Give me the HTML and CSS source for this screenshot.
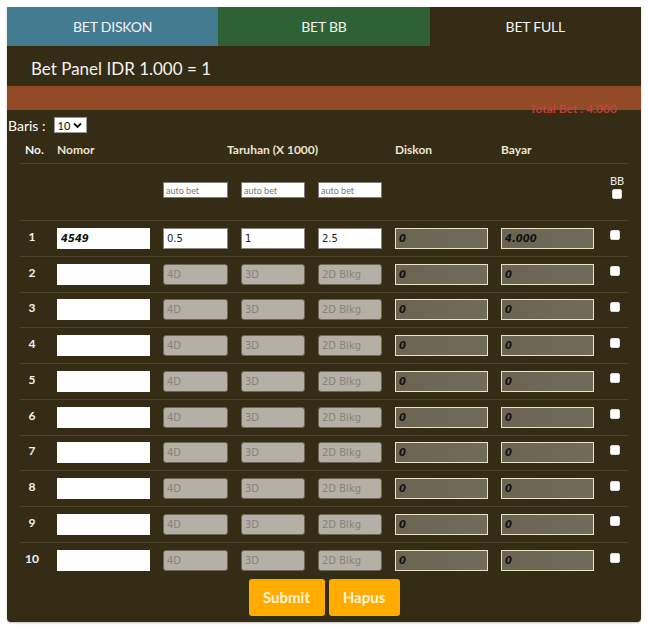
FILE: index.html
```html
<!DOCTYPE html>
<html>
<head>
<meta charset="utf-8">
<link rel="stylesheet" href="styles.css">
</head>
<body>
<div class="panel">
  <div class="tabs">
    <div class="tab tab-diskon">BET DISKON</div>
    <div class="tab tab-bb">BET BB</div>
    <div class="tab tab-full">BET FULL</div>
  </div>
  <div class="title">Bet Panel IDR 1.000 = 1</div>
  <div class="totalbar"><span class="total">Total Bet : 4.000</span></div>
  <div class="baris">
    <span>Baris :</span>
    <span class="select">10 <svg width="9" height="7" viewBox="0 0 9 7"><path d="M1 1.5 L4.5 5 L8 1.5" fill="none" stroke="#111" stroke-width="1.8"/></svg></span>
  </div>
  <div class="table">
    <div class="row head">
      <div class="c-no">No.</div>
      <div>Nomor</div>
      <div class="span3">Taruhan (X 1000)</div>
      <div>Diskon</div>
      <div>Bayar</div>
      <div></div>
    </div>
    <div class="row auto">
      <div></div>
      <div></div>
      <input class="autobet" placeholder="auto bet">
      <input class="autobet" placeholder="auto bet">
      <input class="autobet" placeholder="auto bet">
      <div></div>
      <div></div>
      <div class="bb"><span>BB</span><input type="checkbox" class="cb"></div>
    </div>
    <div class="row data">
      <div class="c-no">1</div>
      <input class="nomor" value="4549">
      <input class="bet" value="0.5">
      <input class="bet" value="1">
      <input class="bet" value="2.5">
      <input class="calc" value="0">
      <input class="calc" value="4.000">
      <input type="checkbox" class="cb">
    </div>
    <div class="row data">
      <div class="c-no">2</div>
      <input class="nomor">
      <input class="bet off" placeholder="4D">
      <input class="bet off" placeholder="3D">
      <input class="bet off" placeholder="2D Blkg">
      <input class="calc" value="0">
      <input class="calc" value="0">
      <input type="checkbox" class="cb">
    </div>
    <div class="row data">
      <div class="c-no">3</div>
      <input class="nomor">
      <input class="bet off" placeholder="4D">
      <input class="bet off" placeholder="3D">
      <input class="bet off" placeholder="2D Blkg">
      <input class="calc" value="0">
      <input class="calc" value="0">
      <input type="checkbox" class="cb">
    </div>
    <div class="row data">
      <div class="c-no">4</div>
      <input class="nomor">
      <input class="bet off" placeholder="4D">
      <input class="bet off" placeholder="3D">
      <input class="bet off" placeholder="2D Blkg">
      <input class="calc" value="0">
      <input class="calc" value="0">
      <input type="checkbox" class="cb">
    </div>
    <div class="row data">
      <div class="c-no">5</div>
      <input class="nomor">
      <input class="bet off" placeholder="4D">
      <input class="bet off" placeholder="3D">
      <input class="bet off" placeholder="2D Blkg">
      <input class="calc" value="0">
      <input class="calc" value="0">
      <input type="checkbox" class="cb">
    </div>
    <div class="row data">
      <div class="c-no">6</div>
      <input class="nomor">
      <input class="bet off" placeholder="4D">
      <input class="bet off" placeholder="3D">
      <input class="bet off" placeholder="2D Blkg">
      <input class="calc" value="0">
      <input class="calc" value="0">
      <input type="checkbox" class="cb">
    </div>
    <div class="row data">
      <div class="c-no">7</div>
      <input class="nomor">
      <input class="bet off" placeholder="4D">
      <input class="bet off" placeholder="3D">
      <input class="bet off" placeholder="2D Blkg">
      <input class="calc" value="0">
      <input class="calc" value="0">
      <input type="checkbox" class="cb">
    </div>
    <div class="row data">
      <div class="c-no">8</div>
      <input class="nomor">
      <input class="bet off" placeholder="4D">
      <input class="bet off" placeholder="3D">
      <input class="bet off" placeholder="2D Blkg">
      <input class="calc" value="0">
      <input class="calc" value="0">
      <input type="checkbox" class="cb">
    </div>
    <div class="row data">
      <div class="c-no">9</div>
      <input class="nomor">
      <input class="bet off" placeholder="4D">
      <input class="bet off" placeholder="3D">
      <input class="bet off" placeholder="2D Blkg">
      <input class="calc" value="0">
      <input class="calc" value="0">
      <input type="checkbox" class="cb">
    </div>
    <div class="row data last">
      <div class="c-no">10</div>
      <input class="nomor">
      <input class="bet off" placeholder="4D">
      <input class="bet off" placeholder="3D">
      <input class="bet off" placeholder="2D Blkg">
      <input class="calc" value="0">
      <input class="calc" value="0">
      <input type="checkbox" class="cb">
    </div>
  </div>
  <div class="actions">
    <button class="btn submit">Submit</button>
    <button class="btn hapus">Hapus</button>
  </div>
</div>
</body>
</html>
```
FILE: styles.css
```css
* { box-sizing: border-box; }
body {
  margin: 0;
  background: #fff;
  font-family: Lato, "Open Sans", sans-serif;
}
.panel {
  margin: 7px;
  width: 634px;
  height: 615px;
  background: #352c15;
  border-radius: 0 0 4px 4px;
  box-shadow: 0 1px 2px rgba(0,0,0,0.25);
  color: #fff;
}
.tabs {
  display: flex;
  height: 39px;
}
.tab {
  flex: 1;
  display: flex;
  align-items: center;
  justify-content: center;
  font-size: 14px;
  color: #f4f4f4;
  letter-spacing: -0.2px;
}
.tab-diskon { background: #437b91; }
.tab-bb { background: #2e6133; }
.tab-full { background: #352c15; }
.title {
  height: 40px;
  padding: 12px 0 0 24px;
  line-height: 22px;
  font-size: 17px;
  color: #f2f2f2;
}
.totalbar {
  position: relative;
  height: 24px;
  background: #934a27;
}
.total {
  position: absolute;
  right: 24px;
  bottom: -6px;
  font-size: 12px;
  font-weight: 700;
  color: #c9443a;
  opacity: 0.9;
}
.baris {
  display: flex;
  align-items: center;
  gap: 8px;
  margin-top: 7px;
  height: 16px;
  padding-left: 1px;
  font-size: 14px;
  color: #fff;
}
.select {
  display: inline-flex;
  align-items: center;
  gap: 3px;
  width: 33px;
  height: 16px;
  padding-left: 3px;
  background: #fff;
  color: #111;
  font-size: 11px;
  border: 1px solid #999;
}
.table {
  margin: 0 13px;
}
.row {
  display: grid;
  grid-template-columns: 24px 93px 65px 64px 64px 93px 93px 20px;
  column-gap: 13px;
  border-bottom: 1px solid #4c432d;
}
.row.last { border-bottom: none; }
.head {
  height: 31px;
  padding-top: 9px;
  line-height: 16px;
  font-size: 12px;
  font-weight: 700;
  color: #ece4cf;
}
.head .c-no { text-align: left; padding-left: 5px; transform: none; }
.span3 { grid-column: span 3; text-align: center; }
.auto {
  height: 57px;
  padding-top: 18px;
  align-items: start;
}
.autobet {
  height: 16px;
  width: 100%;
  border: 1px solid #7c7a72;
  background: #fff;
  font-family: Lato, sans-serif;
  font-size: 9px;
  padding: 0 2px;
}
.autobet::placeholder { color: #777; }
.bb {
  margin-top: -8px;
  display: flex;
  flex-direction: column;
  align-items: center;
  gap: 2px;
  font-size: 11px;
  color: #f0f0f0;
}
.data {
  height: 35.75px;
  align-items: center;
}
.c-no {
  text-align: center;
  font-size: 12px;
  font-weight: 700;
  color: #f2f2f2;
  transform: translateY(-2px);
}
.data input { font-family: "DejaVu Sans", sans-serif; }
.nomor {
  height: 21px;
  width: 100%;
  border: none;
  background: #fff;
  padding: 0 4px;
  font-size: 10px;
  font-weight: 700;
  font-style: italic;
  color: #111;
}
.bet {
  height: 21px;
  width: 100%;
  border: 1px solid #8a8780;
  background: #fff;
  padding: 0 3px;
  font-size: 10px;
  color: #222;
}
.bet.off {
  background: #b4b0a5;
  border: 1px solid #6c6858;
  border-radius: 3px;
}
.bet.off::placeholder { color: #86837a; }
.calc {
  height: 21px;
  width: 100%;
  border: 1px solid #e9e3cc;
  background: linear-gradient(90deg, #6a6451, #716c5a);
  padding: 0 3px;
  font-size: 10px;
  font-weight: 700;
  font-style: italic;
  color: #111;
}
.cb {
  appearance: none;
  -webkit-appearance: none;
  margin: 0 0 0 3px;
  width: 10px;
  height: 10px;
  background: #fff;
  border: 1px solid #ddd;
  border-radius: 2px;
  justify-self: start;
  align-self: center;
  transform: translateY(-3px);
}
.bb .cb { margin: 0; transform: none; }
.actions {
  display: flex;
  justify-content: center;
  gap: 4px;
  margin-top: 0;
}
.btn {
  height: 37px;
  padding: 0;
  border: none;
  border-radius: 3px;
  background: #ffab00;
  color: #fff4dc;
  font-family: Lato, sans-serif;
  font-size: 15px;
  font-weight: 700;
}
.btn.submit { width: 76px; }
.btn.hapus { width: 71px; }
```
